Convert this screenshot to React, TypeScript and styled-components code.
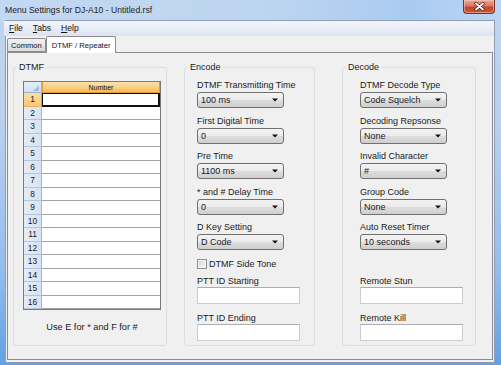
import React from 'react'
import styled, { createGlobalStyle } from 'styled-components'

const GlobalStyle = createGlobalStyle`
  html, body {
    margin: 0;
    padding: 0;
    background: #ffffff;
  }
  body {
    font-family: "Liberation Sans", Arial, sans-serif;
    color: #1a1a1a;
  }
`

// window chrome
const Window = styled.div`
  width: 501px;
  height: 365px;
  box-sizing: border-box;
  display: flex;
  flex-direction: column;
  padding: 0 6px 2px 5px;
  background: linear-gradient(180deg, #c0d6f0 0%, #b8d0ee 35%, #93bceb 75%, #62a0e4 100%);
`
const TitleBar = styled.div`
  height: 20px;
  display: flex;
  justify-content: space-between;
  align-items: flex-start;
  margin: 0 -6px 0 -5px;
  padding: 0 6px 0 5px;
  background: linear-gradient(90deg, #c3d8f1 0%, #bdd4f0 55%, #a9cbf2 82%, #bcd6f3 100%);
`
const TitleText = styled.div`
  font-size: 8.6px;
  line-height: 10px;
  padding-top: 5px;
  color: #1e1e1e;
`
const CloseButton = styled.div`
  width: 32px;
  height: 14px;
  box-sizing: border-box;
  border: 1px solid #7d3024;
  border-top: none;
  border-radius: 0 0 4px 4px;
  display: flex;
  align-items: center;
  justify-content: center;
  background: linear-gradient(180deg, #e7a797 0%, #d77a66 45%, #c5452c 55%, #c9573c 100%);
  box-shadow: inset 0 0 0 1px rgba(255, 220, 210, 0.45);
`
const Client = styled.div`
  flex: 1;
  display: flex;
  flex-direction: column;
  border: 1px solid #8d9db3;
  background: #f0f0f0;
`
const MenuBar = styled.div`
  height: 14px;
  display: flex;
  align-items: center;
  margin-left: -2px;
  border-bottom: 1px solid #dfe3ee;
  background: linear-gradient(180deg, #f4f5fb 0%, #e9ecf6 60%, #dde3f1 100%);
`
const MenuItem = styled.span`
  font-size: 8.6px;
  padding: 0 5px;
  color: #111;
  u { text-decoration: underline; }
`
const TabStrip = styled.div`
  height: 16px;
  display: flex;
  align-items: flex-end;
  padding-left: 1px;
`
const Tab = styled.div<{ $active?: boolean }>`
  box-sizing: border-box;
  height: ${p => (p.$active ? 17 : 14)}px;
  padding: 0 ${p => (p.$active ? 5 : 3)}px;
  display: flex;
  align-items: center;
  font-size: 7.6px;
  color: #111;
  border: 1px solid #898c95;
  border-bottom: ${p => (p.$active ? 'none' : '1px solid #898c95')};
  border-radius: 2px 2px 0 0;
  margin-bottom: ${p => (p.$active ? -1 : 0)}px;
  position: relative;
  z-index: ${p => (p.$active ? 2 : 1)};
  background: ${p => (p.$active ? '#ffffff' : 'linear-gradient(180deg, #f2f2f2 0%, #e6e6e6 50%, #dcdcdc 100%)')};
`
const TabPage = styled.div`
  flex: 1;
  margin: 0 1px 2px 1px;
  border: 1px solid #898c95;
  background: #f0f0f0;
  display: flex;
  align-items: stretch;
  padding: 9px 0 13px 0;
`

// group boxes
const GroupBox = styled.fieldset<{ $width: number; $gap: number }>`
  box-sizing: border-box;
  width: ${p => p.$width}px;
  min-width: 0;
  margin: 0 0 0 ${p => p.$gap}px;
  padding: 0;
  border: 1px solid #d5dfe5;
  border-radius: 3px;
`
const GroupLegend = styled.legend`
  margin-left: 3px;
  padding: 0 2px;
  font-size: 9px;
  line-height: 11px;
  color: #1a1a1a;
`
const GroupBody = styled.div<{ $padTop: number; $padLeft: number }>`
  display: flex;
  flex-direction: column;
  padding: ${p => p.$padTop}px 0 0 ${p => p.$padLeft}px;
`

// DTMF grid
const Grid = styled.div`
  width: 138px;
  height: 229px;
  box-sizing: border-box;
  border: 1px solid #7a7a7a;
  display: grid;
  grid-template-columns: 18px 1fr;
  grid-template-rows: 11px repeat(16, 1fr);
  background: #ffffff;
`
const CornerCell = styled.div`
  position: relative;
  border-right: 1px solid #9eb3cc;
  border-bottom: 1px solid #9eb3cc;
  background: linear-gradient(180deg, #e6eef9 0%, #d4e0f1 100%);
`
const CornerMark = styled.svg`
  position: absolute;
  right: 2px;
  bottom: 1px;
`
const ColHeader = styled.div`
  display: flex;
  align-items: center;
  justify-content: center;
  font-size: 7px;
  color: #111;
  border: 1px solid #e39a34;
  border-top: none;
  background: linear-gradient(180deg, #fbe2ad 0%, #f8cf80 55%, #f3bb5c 100%);
`
const RowHeader = styled.div<{ $selected?: boolean }>`
  display: flex;
  align-items: center;
  justify-content: center;
  font-size: 8.4px;
  color: #1a1a1a;
  border-right: 1px solid ${p => (p.$selected ? '#e39a34' : '#9eb3cc')};
  border-bottom: 1px solid ${p => (p.$selected ? '#e8b466' : '#b3c5dc')};
  background: ${p => (p.$selected
    ? 'linear-gradient(180deg, #fbdfa6 0%, #f6c874 100%)'
    : 'linear-gradient(90deg, #e4ecf7 0%, #d8e3f3 100%)')};
`
const DataCell = styled.div<{ $current?: boolean }>`
  box-sizing: border-box;
  border-bottom: 1px solid #a3a3a3;
  ${p => p.$current && `
    border: 1px solid #111;
    box-shadow: inset -1px -1px 0 #111;
  `}
`
const GridNote = styled.div`
  width: 138px;
  margin-top: 11px;
  text-align: center;
  font-size: 9.2px;
  line-height: 12px;
`

// form controls
const Field = styled.div`
  display: flex;
  flex-direction: column;
  margin-bottom: 6.5px;
`
const FieldLabel = styled.div`
  font-size: 9px;
  line-height: 12px;
  white-space: nowrap;
`
const ComboBox = styled.div`
  box-sizing: border-box;
  width: 87px;
  height: 16px;
  margin-top: 1px;
  padding: 0 5px 0 3px;
  display: flex;
  align-items: center;
  justify-content: space-between;
  font-size: 9px;
  border: 1px solid #707070;
  border-radius: 3px;
  background: linear-gradient(180deg, #f3f3f3 0%, #ebebeb 48%, #dddddd 52%, #cfcfcf 100%);
`
const CheckRow = styled.div`
  height: 14px;
  display: flex;
  align-items: center;
  font-size: 9px;
  margin-bottom: 4.5px;
`
const CheckBox = styled.span`
  box-sizing: border-box;
  width: 10px;
  height: 10px;
  margin-right: 2px;
  border: 1px solid #8e8f8f;
  background: linear-gradient(135deg, #d3d3d3 0%, #eeeeee 70%, #f8f8f8 100%);
  box-shadow: inset 0 0 0 1px #f4f4f4;
`
const Spacer = styled.div`
  height: 14px;
  margin-bottom: 4.5px;
`
const TextBox = styled.div<{ $last?: boolean }>`
  box-sizing: border-box;
  width: 103px;
  height: 17px;
  margin-bottom: ${p => (p.$last ? 0 : 8)}px;
  background: #ffffff;
  border: 1px solid #c9ccd2;
  border-top-color: #abadb3;
`

const encodeFields = [
  { label: 'DTMF Transmitting Time', value: '100 ms' },
  { label: 'First Digital Time', value: '0' },
  { label: 'Pre Time', value: '1100 ms' },
  { label: '* and # Delay Time', value: '0' },
  { label: 'D Key Setting', value: 'D Code' },
]

const decodeFields = [
  { label: 'DTMF Decode Type', value: 'Code Squelch' },
  { label: 'Decoding Repsonse', value: 'None' },
  { label: 'Invalid Character', value: '#' },
  { label: 'Group Code', value: 'None' },
  { label: 'Auto Reset Timer', value: '10 seconds' },
]

function Combo({ value }: { value: string }) {
  return (
    <ComboBox>
      <span>{value}</span>
      <svg width="6" height="4" viewBox="0 0 6 4">
        <path d="M0 0.5 L6 0.5 L3 3.5 Z" fill="#111" />
      </svg>
    </ComboBox>
  )
}

function TextField({ label, last }: { label: string; last?: boolean }) {
  return (
    <>
      <FieldLabel>{label}</FieldLabel>
      <TextBox $last={last} />
    </>
  )
}

export default function App() {
  const rows = Array.from({ length: 16 }, (_, i) => i + 1)
  return (
    <Window>
      <GlobalStyle />
      <TitleBar>
        <TitleText>Menu Settings for DJ-A10 - Untitled.rsf</TitleText>
        <CloseButton>
          <svg width="11" height="9" viewBox="0 0 11 9">
            <path d="M2 1.5 L9 7.5 M9 1.5 L2 7.5" stroke="#5a2018" strokeWidth="3.4" strokeLinecap="round" />
            <path d="M2 1.5 L9 7.5 M9 1.5 L2 7.5" stroke="#ffffff" strokeWidth="1.8" strokeLinecap="round" />
          </svg>
        </CloseButton>
      </TitleBar>
      <Client>
        <MenuBar>
          <MenuItem><u>F</u>ile</MenuItem>
          <MenuItem><u>T</u>abs</MenuItem>
          <MenuItem><u>H</u>elp</MenuItem>
        </MenuBar>
        <TabStrip>
          <Tab>Common</Tab>
          <Tab $active>DTMF / Repeater</Tab>
        </TabStrip>
        <TabPage>
          <GroupBox $width={154} $gap={5}>
            <GroupLegend>DTMF</GroupLegend>
            <GroupBody $padTop={8} $padLeft={9}>
              <Grid>
                <CornerCell>
                  <CornerMark width="6" height="6" viewBox="0 0 6 6">
                    <path d="M6 0 L6 6 L0 6 Z" fill="#a9bdd6" />
                  </CornerMark>
                </CornerCell>
                <ColHeader>Number</ColHeader>
                {rows.map(n => (
                  <React.Fragment key={n}>
                    <RowHeader $selected={n === 1}>{n}</RowHeader>
                    <DataCell $current={n === 1} />
                  </React.Fragment>
                ))}
              </Grid>
              <GridNote>Use E for * and F for #</GridNote>
            </GroupBody>
          </GroupBox>

          <GroupBox $width={131} $gap={17}>
            <GroupLegend>Encode</GroupLegend>
            <GroupBody $padTop={6} $padLeft={12}>
              {encodeFields.map(f => (
                <Field key={f.label}>
                  <FieldLabel>{f.label}</FieldLabel>
                  <Combo value={f.value} />
                </Field>
              ))}
              <CheckRow>
                <CheckBox />
                DTMF Side Tone
              </CheckRow>
              <TextField label="PTT ID Starting" />
              <TextField label="PTT ID Ending" last />
            </GroupBody>
          </GroupBox>

          <GroupBox $width={134} $gap={27}>
            <GroupLegend>Decode</GroupLegend>
            <GroupBody $padTop={6} $padLeft={17}>
              {decodeFields.map(f => (
                <Field key={f.label}>
                  <FieldLabel>{f.label}</FieldLabel>
                  <Combo value={f.value} />
                </Field>
              ))}
              <Spacer />
              <TextField label="Remote Stun" />
              <TextField label="Remote Kill" last />
            </GroupBody>
          </GroupBox>
        </TabPage>
      </Client>
    </Window>
  )
}
